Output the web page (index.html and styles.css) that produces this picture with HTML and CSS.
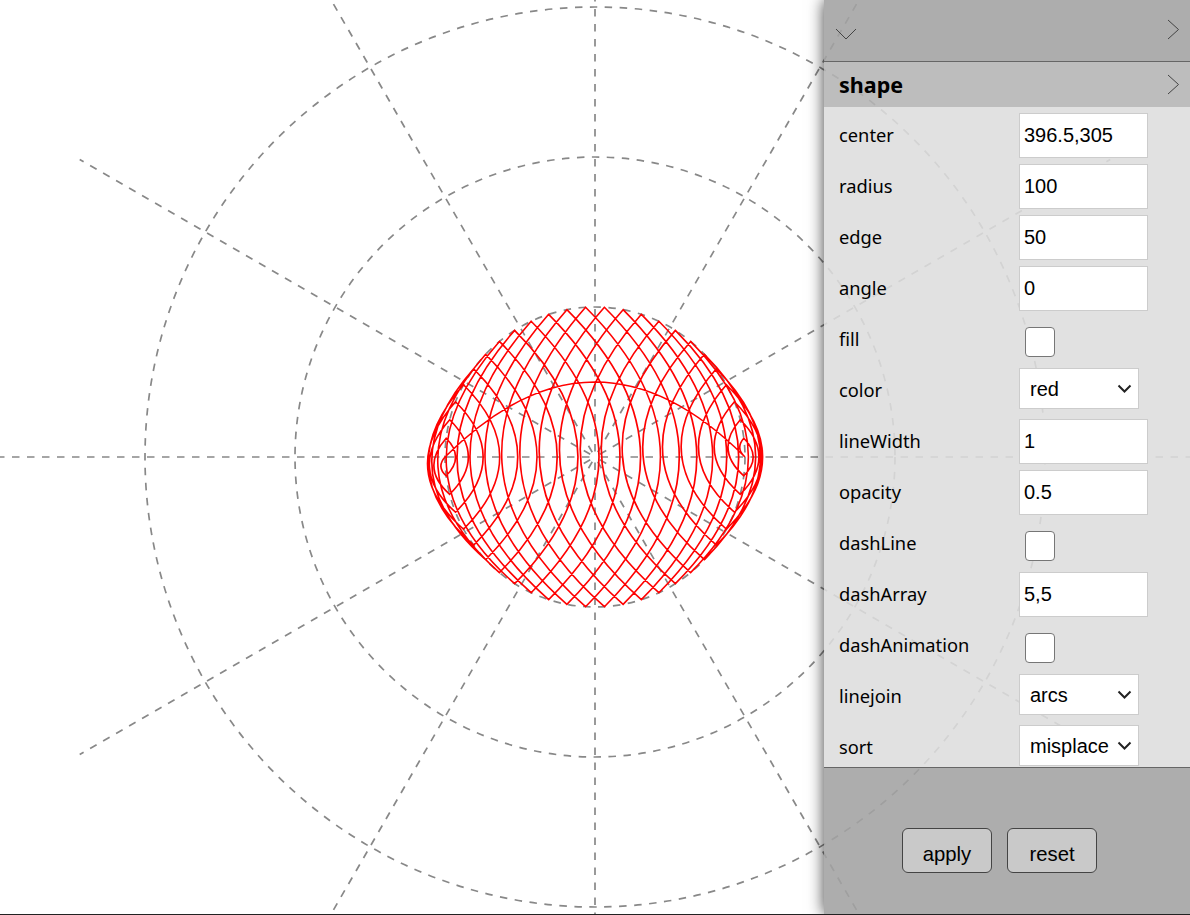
FILE: index.html
```html
<!DOCTYPE html>
<html lang="en">
<head>
    <meta charset="UTF-8">
    <meta name="viewport" content="width=device-width, initial-scale=1.0">
    <title>shape</title>
    <link rel="stylesheet" href="styles.css">
</head>
<body>
    <div class="stage">
        <svg class="board" id="board" width="1190" height="914" viewBox="0 0 1190 914"></svg>

        <div class="panel">
            <div class="panel-top">
                <svg class="icon-down" width="22" height="12" viewBox="0 0 22 12"><path d="M1 1 L11 11 L21 1"/></svg>
                <svg class="icon-right" width="13" height="21" viewBox="0 0 13 21"><path d="M1 1 L11.5 10.5 L1 20"/></svg>
            </div>
            <div class="panel-title">
                <span>shape</span>
                <svg class="icon-right" width="13" height="21" viewBox="0 0 13 21"><path d="M1 1 L11.5 10.5 L1 20"/></svg>
            </div>
            <div class="panel-body">
                <div class="row"><label>center</label><input type="text" value="396.5,305"></div>
                <div class="row"><label>radius</label><input type="text" value="100"></div>
                <div class="row"><label>edge</label><input type="text" value="50"></div>
                <div class="row"><label>angle</label><input type="text" value="0"></div>
                <div class="row"><label>fill</label><input type="checkbox"></div>
                <div class="row"><label>color</label><select><option>red</option></select></div>
                <div class="row"><label>lineWidth</label><input type="text" value="1"></div>
                <div class="row"><label>opacity</label><input type="text" value="0.5"></div>
                <div class="row"><label>dashLine</label><input type="checkbox"></div>
                <div class="row"><label>dashArray</label><input type="text" value="5,5"></div>
                <div class="row"><label>dashAnimation</label><input type="checkbox"></div>
                <div class="row"><label>linejoin</label><select><option>arcs</option></select></div>
                <div class="row"><label>sort</label><select><option>misplace</option></select></div>
            </div>
            <div class="panel-foot">
                <button>apply</button>
                <button>reset</button>
            </div>
        </div>
    </div>

    <script src="draw.js"></script>
</body>
</html>
```

FILE: styles.css
```css
html, body {
    margin: 0;
    height: 915px;
    overflow: hidden;
    background-color: #fff;
}
.stage {
    position: relative;
    height: 914px;
    border-bottom: 1px solid #222;
    overflow: hidden;
}
.board {
    display: block;
}
.board .grid {
    fill: none;
    stroke: #888;
    stroke-width: 1.7;
    stroke-dasharray: 7.5 7.5;
}
.board .spoke {
    stroke-dashoffset: 3;
}
.board .curve {
    fill: none;
    stroke: #f00;
    stroke-width: 1.6;
}
.panel {
    position: absolute;
    top: 0;
    right: 0;
    bottom: 0;
    width: 366px;
    display: flex;
    flex-direction: column;
    box-shadow: 0 0 15px rgba(0, 0, 0, 0.75);
    font-family: "Noto Sans", sans-serif;
    color: #000;
}
.panel svg path {
    fill: none;
    stroke: #444;
    stroke-width: 1;
}
.panel-top {
    height: 62px;
    flex: none;
    box-sizing: border-box;
    display: flex;
    justify-content: space-between;
    padding: 19px 10px 0 11px;
    background-color: rgba(162, 162, 162, 0.88);
    border-bottom: 1px solid #666;
}
.icon-down {
    margin-top: 9px;
}
.panel-title {
    height: 45px;
    flex: none;
    box-sizing: border-box;
    display: flex;
    justify-content: space-between;
    align-items: center;
    padding: 0 10px 0 15px;
    background-color: rgba(180, 180, 180, 0.88);
    font-size: 21.5px;
    font-weight: bold;
}
.panel-body {
    flex: 1;
    min-height: 0;
    overflow: hidden;
    box-sizing: border-box;
    padding: 6px 0 0 15px;
    background-color: rgba(221, 221, 221, 0.88);
    border-bottom: 1px solid #666;
}
.row {
    height: 51px;
    display: flex;
    align-items: flex-start;
}
.row label {
    width: 180px;
    flex: none;
    height: 43px;
    line-height: 43px;
    font-size: 18.3px;
}
.row input[type="text"] {
    width: 129px;
    height: 45px;
    box-sizing: border-box;
    border: 1px solid #ccc;
    padding: 0 4px;
    background-color: #fff;
    font-family: "Liberation Sans", Arial, sans-serif;
    font-size: 20px;
    color: #000;
}
.row input[type="checkbox"] {
    appearance: none;
    width: 30px;
    height: 30px;
    box-sizing: border-box;
    margin: 10px 0 0 6px;
    border: 1px solid #767676;
    border-radius: 4px;
    background-color: #fff;
}
.row select {
    appearance: none;
    width: 120px;
    height: 41px;
    box-sizing: border-box;
    border: 1px solid #ccc;
    padding: 0 10px;
    background: #fff url("data:image/svg+xml,%3Csvg xmlns='http://www.w3.org/2000/svg' width='15' height='9'%3E%3Cpath d='M1.5 1.5 L7.5 7.5 L13.5 1.5' fill='none' stroke='%23222' stroke-width='2'/%3E%3C/svg%3E") no-repeat right 6px center;
    font-family: "Liberation Sans", Arial, sans-serif;
    font-size: 20px;
    color: #000;
}
.panel-foot {
    height: 146px;
    flex: none;
    box-sizing: border-box;
    display: flex;
    gap: 15px;
    padding: 60px 0 0 78px;
    background-color: rgba(162, 162, 162, 0.88);
}
.panel-foot button {
    width: 90px;
    height: 45px;
    box-sizing: border-box;
    border: 1px solid #444;
    border-radius: 6px;
    padding: 8px 0 0;
    background-color: #c9c9c9;
    font-family: "Liberation Sans", Arial, sans-serif;
    font-size: 20.3px;
    color: #000;
}
```

FILE: draw.js
```js
// Polar grid and the 50 point curve, same numbers as the panel (scale 1.5)
const board = document.getElementById('board');
const cx = 595;
const cy = 457;
const radius = 150;
const edge = 50;

function addShape(tag, className, attrs) {
    const el = document.createElementNS('http://www.w3.org/2000/svg', tag);
    el.setAttribute('class', className);
    for (let key in attrs) {
        el.setAttribute(key, attrs[key]);
    }
    board.appendChild(el);
}

// rings
[150, 300, 450].forEach(function (r) {
    addShape('circle', 'grid', { cx: cx, cy: cy, r: r });
});

// spokes, every 30 degrees, drawn from the outside in
for (let i = 0; i < 12; i++) {
    const a = i * Math.PI / 6;
    addShape('line', 'grid spoke', {
        x1: cx + 595 * Math.cos(a),
        y1: cy + 595 * Math.sin(a),
        x2: cx,
        y2: cy
    });
}

// points on the circle
const points = [];
for (let i = 0; i < edge; i++) {
    const a = i * 2 * Math.PI / edge;
    points.push([cx + radius * Math.cos(a), cy + radius * Math.sin(a)]);
}

// misplace: 0, 49, 1, 48, 2 ...
const order = [];
for (let i = 0; i < edge / 2; i++) {
    order.push(points[i]);
    order.push(points[edge - 1 - i]);
}
order.push(points[0]);

// every join bends out by a quarter of its chord (control point at half a chord)
let d = 'M' + order[0][0] + ' ' + order[0][1];
for (let i = 1; i < order.length; i++) {
    const p = order[i - 1];
    const q = order[i];
    const mx = (p[0] + q[0]) / 2;
    const my = (p[1] + q[1]) / 2;
    const nx = -(q[1] - p[1]) / 2;
    const ny = (q[0] - p[0]) / 2;
    d += ' Q' + (mx - nx) + ' ' + (my - ny) + ' ' + q[0] + ' ' + q[1];
}
addShape('path', 'curve', { d: d });
```
